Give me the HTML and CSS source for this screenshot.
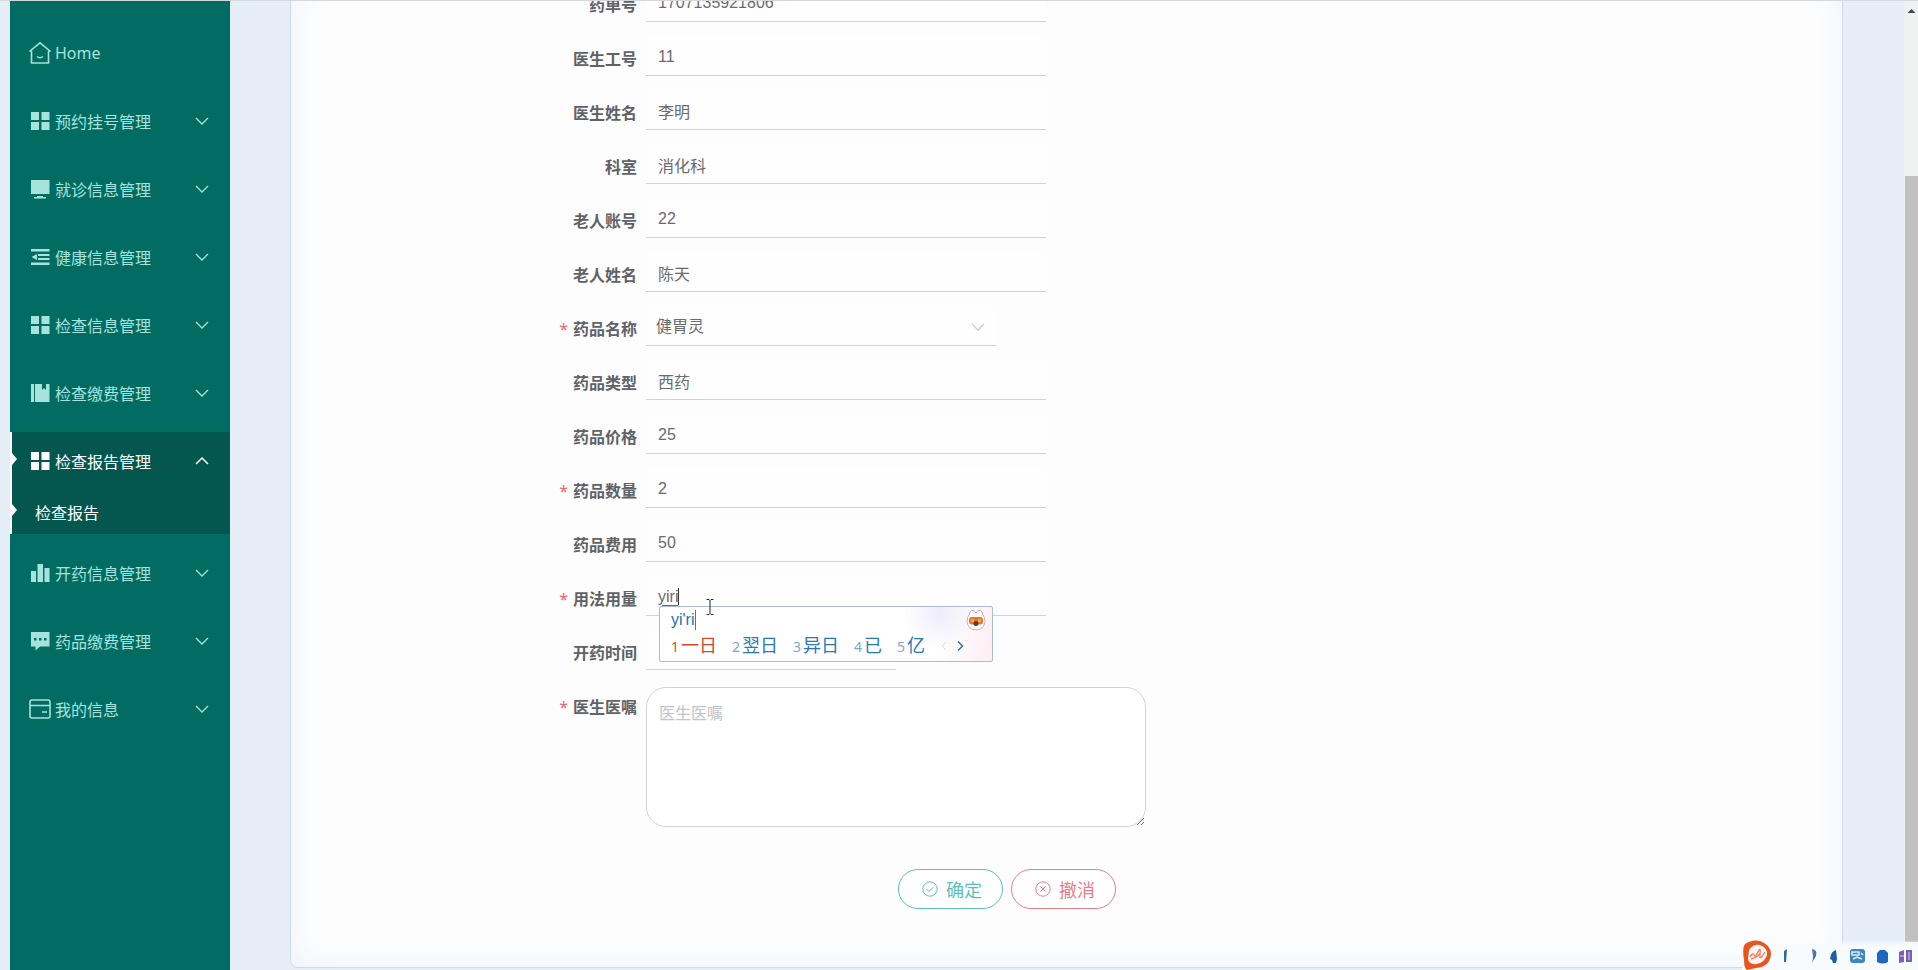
FILE: index.html
```html
<!DOCTYPE html>
<html lang="zh-CN">
<head>
<meta charset="utf-8">
<title>检查报告</title>
<link rel="stylesheet" href="styles.css">
</head>
<body>
<svg class="defs" aria-hidden="true">
  <symbol id="grid" viewBox="0 0 22 22"><path d="M2 2h8v8H2zM12.500 2h8v8h-8zM2 12h8v8H2zM12.500 12h8v8h-8z" fill="currentColor"/></symbol>
  <symbol id="down" viewBox="0 0 14 14"><path d="M1 4l6 6 6-6" fill="none" stroke="currentColor" stroke-width="1.300"/></symbol>
  <symbol id="up" viewBox="0 0 14 14"><path d="M1 10l6-6 6 6" fill="none" stroke="currentColor" stroke-width="1.500"/></symbol>
</svg>
<div class="app">
  <nav class="sidebar">
    <a class="item" href="#"><svg class="icon" viewBox="0 0 22 22"><path d="M2.500 21V9.500L1 9l10-8.200L21 9l-1.500.5V21z M8 14.500q3 2.500 6 0" fill="none" stroke="currentColor" stroke-width="1.600" stroke-linejoin="round"/></svg><span>Home</span></a>
    <a class="item" href="#"><svg class="icon"><use href="#grid"/></svg><span>预约挂号管理</span><svg class="arrow"><use href="#down"/></svg></a>
    <a class="item" href="#"><svg class="icon" viewBox="0 0 22 22"><path d="M2 2h18.500v14H2zM8 18h6v1h3v1.500H5V19h3z" fill="currentColor"/></svg><span>就诊信息管理</span><svg class="arrow"><use href="#down"/></svg></a>
    <a class="item" href="#"><svg class="icon" viewBox="0 0 22 22"><path d="M2 3h18.500v2.500H2zM9 8h11.500v2H9zM9 12h11.500v2H9zM2 16.500h18.500V19H2zM2.500 11L8 8v6z" fill="currentColor"/></svg><span>健康信息管理</span><svg class="arrow"><use href="#down"/></svg></a>
    <a class="item" href="#"><svg class="icon"><use href="#grid"/></svg><span>检查信息管理</span><svg class="arrow"><use href="#down"/></svg></a>
    <a class="item" href="#"><svg class="icon" viewBox="0 0 22 22"><path d="M2 2h3v18H2zM6 2h7v6l2-2 2 2V2h3.500v18H6z" fill="currentColor"/></svg><span>检查缴费管理</span><svg class="arrow"><use href="#down"/></svg></a>
    <div class="group">
      <a class="item active" href="#"><svg class="icon"><use href="#grid"/></svg><span>检查报告管理</span><svg class="arrow"><use href="#up"/></svg></a>
      <a class="sub active" href="#">检查报告</a>
    </div>
    <a class="item" href="#"><svg class="icon" viewBox="0 0 22 22"><path d="M2 9h5v11H2zM8.500 2h5.500v18H8.500zM15.500 6h5v14h-5z" fill="currentColor"/></svg><span>开药信息管理</span><svg class="arrow"><use href="#down"/></svg></a>
    <a class="item" href="#"><svg class="icon" viewBox="0 0 22 22"><path fill-rule="evenodd" d="M2 2h18.500v14.500H11L6.500 20.500v-4H2zM5 8v2.500h2.500V8zM10 8v2.500h2.500V8zM15 8v2.500h2.500V8z" fill="currentColor"/></svg><span>药品缴费管理</span><svg class="arrow"><use href="#down"/></svg></a>
    <a class="item" href="#"><svg class="icon" viewBox="0 0 22 22"><rect x="1" y="2" width="20" height="18" rx="2" fill="none" stroke="currentColor" stroke-width="1.600"/><path d="M1 7.500h20M13 14h5" stroke="currentColor" stroke-width="1.600"/></svg><span>我的信息</span><svg class="arrow"><use href="#down"/></svg></a>
  </nav>
  <main class="main">
    <form class="panel">
      <div class="row"><label for="f1">药单号</label><input id="f1" type="text" value="1707135921806"></div>
      <div class="row"><label for="f2">医生工号</label><input id="f2" type="text" value="11"></div>
      <div class="row"><label for="f3">医生姓名</label><input id="f3" type="text" value="李明"></div>
      <div class="row"><label for="f4">科室</label><input id="f4" type="text" value="消化科"></div>
      <div class="row"><label for="f5">老人账号</label><input id="f5" type="text" value="22"></div>
      <div class="row"><label for="f6">老人姓名</label><input id="f6" type="text" value="陈天"></div>
      <div class="row"><label class="required" for="f7">药品名称</label><div class="pick"><select id="f7"><option>健胃灵</option></select><svg class="pick-arrow"><use href="#down"/></svg></div></div>
      <div class="row"><label for="f8">药品类型</label><input id="f8" type="text" value="西药"></div>
      <div class="row"><label for="f9">药品价格</label><input id="f9" type="text" value="25"></div>
      <div class="row"><label class="required" for="f10">药品数量</label><input id="f10" type="text" value="2"></div>
      <div class="row"><label for="f11">药品费用</label><input id="f11" type="text" value="50"></div>
      <div class="row"><label class="required" for="f12">用法用量</label>
        <div class="compose"><input id="f12" class="composing" type="text" value="yiri"><i class="caret"></i>
          <svg class="pointer" viewBox="0 0 8 16"><path d="M.5.5h2.500l1 1 1-1h2.500M.5 15.500h2.500l1-1 1 1h2.500M4 1.500v13" fill="none" stroke="#222"/></svg>
          <div class="ime">
            <div class="ime-input">yi'ri</div>
            <ol class="ime-list">
              <li class="first"><b>1</b>一日</li><li><b>2</b>翌日</li><li><b>3</b>异日</li><li><b>4</b>已</li><li><b>5</b>亿</li>
              <li class="pager"><svg viewBox="0 0 26 12"><path d="M6 2L2 6l4 4" fill="none" stroke="#d5dde6"/><path d="M18 1.500L22.500 6 18 10.500" fill="none" stroke="#35719c" stroke-width="1.500"/></svg></li>
            </ol>
            <svg class="mascot" viewBox="0 0 20 22"><path d="M3.500 5Q4 1 7 1.500 9 2 10 4 11 2 13 1.500 16 1 16.500 5 19 8 19 12.500 18 20.500 10 21 2 20.500 1 12.500 1 8 3.500 5z" fill="#fff" stroke="#a9a3a8" stroke-width=".8"/><rect x="3" y="8" width="14" height="7.500" rx="3" fill="#ee7420"/><path d="M5 10h3v3H5zM12 10h3v3h-3z" fill="#ffb053"/><circle cx="10" cy="14.500" r="2.500" fill="#49404a"/></svg>
          </div>
        </div>
      </div>
      <div class="row"><label for="f13">开药时间</label><input id="f13" class="date" type="text"></div>
      <div class="row tall"><label class="required" for="f14">医生医嘱</label><textarea id="f14" placeholder="医生医嘱"></textarea></div>
      <div class="actions">
        <button class="btn ok" type="button"><svg viewBox="0 0 16 16"><circle cx="8" cy="8" r="7.200"/><path d="M4.500 8l2.500 2.500 4.500-4.500"/></svg>确定</button>
        <button class="btn undo" type="button"><svg viewBox="0 0 16 16"><circle cx="8" cy="8" r="7.200"/><path d="M5.500 5.500l5 5M10.500 5.500l-5 5"/></svg>撤消</button>
      </div>
    </form>
  </main>
  <div class="scrollbar"><svg viewBox="0 0 14 20"><path d="M3.500 12L7.500 8l4 4z" fill="#444"/></svg><div class="thumb"></div></div>
</div>
<div class="tray">
  <svg viewBox="0 0 176 30">
    <path d="M3 4Q10-1 18 1q11 4 11 13-1 13-15 14l-9 2Q2 28 2 20 0 8 3 4z" fill="#e8561f"/>
    <path d="M7 10Q11 4 18 5q8 3 7 10-2 7-10 9-8 1-9-5z" fill="#fff5f1"/>
    <path d="M8 17q3-5 4-2t4-3 2 2 5-2M9 19q5-1 9-5" fill="none" stroke="#ef8064" stroke-width="1.400"/>
    <path d="M42 11l3-2-1 13h-2z" fill="#2f67a6"/>
    <path d="M70 9q6 1 4 7l-4 7q1-3 1-7z" fill="#4e76b2"/>
    <path d="M88 19q1-8 6-9l1 9-1 4h-3l-1-3z" fill="#1f5dab"/>
    <rect x="108" y="9" width="15" height="14" rx="3" fill="#3c88c0"/><path d="M110 12h7v3h-7zM119 13l2 2M111 19l4-2 5 2" fill="none" stroke="#d8eef8" stroke-width="1.500"/>
    <path d="M135 13l3-3h5l3 3v9q-5 3-11 0z" fill="#1c67c2"/>
    <path d="M157 12l5-2v12l-5 1zM164 10h6v12h-6z" fill="#7a60b4"/><path d="M158 16h4M167 12v8" stroke="#dccaf0"/>
  </svg>
</div>
</body>
</html>
```
FILE: styles.css
```css
* { box-sizing: border-box; }
body {
  margin: 0;
  overflow: hidden;
  background: #e5eef6;
  color: #606266;
  font: 16px "Noto Sans", "Noto Sans CJK SC", sans-serif;
}
.defs { position: absolute; width: 0; height: 0; }
.app {
  display: flex;
  height: 100vh;
  padding-left: 10px;
  border-top: 1px solid #d5d7dc;
}

/* Sidebar */
.sidebar {
  flex: none;
  display: flex;
  flex-direction: column;
  gap: 10px;
  width: 220px;
  padding-top: 23px;
  background: #026c63;
}
.item {
  position: relative;
  display: flex;
  align-items: center;
  height: 58px;
  padding: 0 21px 0 19px;
  color: #a5e3dc;
  text-decoration: none;
}
.icon { width: 22px; height: 22px; margin-right: 4px; }
.arrow { width: 14px; height: 14px; margin-left: auto; }
.group { border-left: 2px solid #fff; background: #04574f; }
.group .item { padding-left: 17px; }
.group .active { color: #fff; }
.sub {
  position: relative;
  display: flex;
  align-items: center;
  height: 44px;
  padding-left: 23px;
  text-decoration: none;
}
.group .active::before {
  content: "";
  position: absolute;
  left: 0;
  top: 50%;
  margin-top: -8px;
  border: 6px solid transparent;
  border-left: 5px solid #fff;
}

/* Form */
.main {
  flex: 1;
  overflow: hidden;
  padding: 0 61px 2px 60px;
}
.panel {
  min-height: calc(100% + 19px);
  margin-top: -19px;
  padding-bottom: 58px;
  border: 1px solid #cfdce8;
  border-top: 0;
  border-radius: 0 0 8px 8px;
  background: #fdfdfe;
  box-shadow: inset 0 0 32px #eaf2fb;
}
.row {
  display: flex;
  height: 54px;
  padding-left: 255px;
}
.row label {
  width: 100px;
  padding-right: 9px;
  color: #606266;
  font-weight: 700;
  line-height: 46px;
  text-align: right;
}
.required::before { content: "*"; margin-right: 5px; color: #e86a6f; font-weight: 400; }
input, select {
  width: 400px;
  height: 40px;
  padding: 2px 12px 0;
  border: 0;
  border-bottom: 1px solid #cdd2d6;
  border-radius: 0;
  outline: 0;
  background: #fefefe;
  color: #696b6f;
  font: 16px "Liberation Sans", "Noto Sans CJK SC", sans-serif;
}
select {
  width: 350px;
  padding: 2px 10px 0;
  appearance: none;
}
.pick { position: relative; }
.pick-arrow {
  position: absolute;
  top: 14px;
  right: 11px;
  width: 14px;
  height: 14px;
  color: #c8ccd2;
}
input.date { width: 250px; }
.compose { position: relative; }
.composing { text-decoration: underline; text-underline-offset: 3px; }
.caret {
  position: absolute;
  left: 32px;
  top: 12px;
  width: 1px;
  height: 17px;
  background: #333;
}
.pointer {
  position: absolute;
  z-index: 3;
  left: 60px;
  top: 23px;
  width: 8px;
  height: 16px;
}
.tall { height: auto; }
textarea {
  width: 500px;
  height: 140px;
  margin-top: 3px;
  padding: 12px;
  border: 1px solid #d0d4d8;
  border-radius: 20px;
  outline: 0;
  background: #fff;
  font: 16px "Liberation Sans", "Noto Sans CJK SC", sans-serif;
}
textarea::placeholder { color: #c0c4cc; }
.actions {
  display: flex;
  gap: 8px;
  padding: 42px 0 0 607px;
}
.btn {
  display: flex;
  align-items: center;
  justify-content: center;
  gap: 8px;
  width: 105px;
  height: 40px;
  padding: 0 0 0 3px;
  border: 1px solid;
  border-radius: 20px;
  background: #fff;
  font: 18px "Noto Sans CJK SC", sans-serif;
}
.btn svg { width: 16px; height: 16px; fill: none; stroke: currentColor; }
.ok { color: #5fc0b8; }
.undo { color: #e57f85; }

/* Input method window */
.ime {
  position: absolute;
  z-index: 2;
  left: 13px;
  top: 30px;
  width: 334px;
  padding: 3px 10px 3px 11px;
  border: 1px solid #a9bdd2;
  border-radius: 2px;
  background: radial-gradient(circle at 280px 6px, #eeebf9, transparent 36px), linear-gradient(100deg, #fff 84%, #fdeef3);
}
.ime-input {
  width: max-content;
  border-right: 1px solid #d4482c;
  color: #2272ab;
  font: 16px/20px "Liberation Sans", sans-serif;
}
.ime-list {
  display: flex;
  gap: 15px;
  margin: 0;
  padding: 0;
  color: #2a78b4;
  font: 18px/28px "Noto Sans CJK SC", sans-serif;
  list-style: none;
}
.ime-list b {
  margin-right: 2px;
  color: #7fa9c8;
  font: 14px "Noto Sans", sans-serif;
}
.ime-list .first, .ime-list .first b { color: #d4482c; }
.pager svg { width: 26px; height: 12px; }
.mascot {
  position: absolute;
  top: 2px;
  right: 6px;
  width: 20px;
  height: 22px;
}

.scrollbar {
  display: flex;
  flex-direction: column;
  width: 14px;
  background: #f0f1f1;
}
.scrollbar svg { width: 14px; height: 20px; }
.thumb {
  height: 79%;
  margin-top: 155px;
  margin-left: 1px;
  background: #c1c1c1;
}
.tray {
  position: absolute;
  right: 0;
  bottom: 0;
  width: 176px;
  height: 30px;
  background: linear-gradient(#f8fbfd00, #f8fbfd 20%);
}
.tray svg { display: block; width: 176px; height: 30px; }
```
